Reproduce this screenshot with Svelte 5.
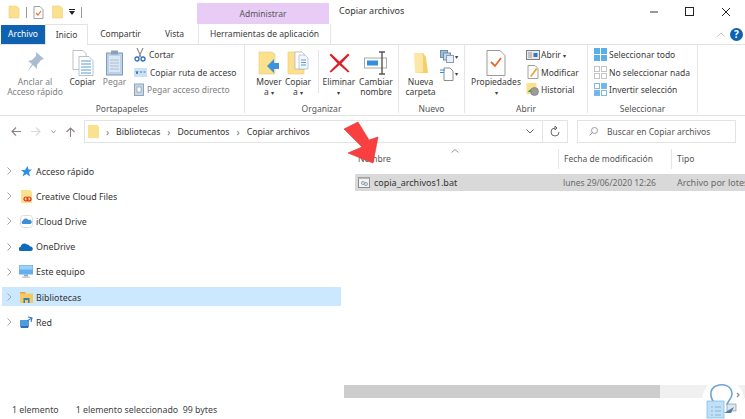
<script>
    const navItems = [
        { label: 'Acceso rápido', icon: 'star' },
        { label: 'Creative Cloud Files', icon: 'cc' },
        { label: 'iCloud Drive', icon: 'icloud' },
        { label: 'OneDrive', icon: 'onedrive' },
        { label: 'Este equipo', icon: 'pc' },
        { label: 'Bibliotecas', icon: 'lib', active: true },
        { label: 'Red', icon: 'net' }
    ];
</script>

<div class="window">
    <!-- title bar -->
    <header class="titlebar">
        <div class="qat">
            <svg width="12" height="14" viewBox="0 0 12 14"><path d="M1 1h7l3 2v10H1z" fill="#fbe08e" stroke="#f0cf7a" stroke-width=".6"/></svg>
            <i class="bar"></i>
            <svg width="11" height="13" viewBox="0 0 11 13"><path d="M1 .5h6l3 3v9H1z" fill="#fff" stroke="#8a8a8a" stroke-width=".8"/><path d="M3 7l2 2 3-4" fill="none" stroke="#e8743b" stroke-width="1.2"/></svg>
            <svg class="gap" width="11" height="14" viewBox="0 0 11 14"><path d="M.5 1h7l3 2v10H.5z" fill="#fbe08e" stroke="#f0cf7a" stroke-width=".6"/></svg>
            <svg width="6" height="6" viewBox="0 0 6 6"><path d="M0 0h6v1H0zM0 2h6L3 6z" fill="#222"/></svg>
            <i class="bar"></i>
        </div>
        <div class="tool-tab">Administrar</div>
        <div class="title">Copiar archivos</div>
        <div class="controls">
            <svg width="10" height="10" viewBox="0 0 10 10"><path d="M1 5h8" stroke="#333" stroke-width="1"/></svg>
            <svg width="10" height="10" viewBox="0 0 10 10"><rect x=".5" y=".5" width="8" height="8" fill="none" stroke="#222"/></svg>
            <svg width="10" height="10" viewBox="0 0 10 10"><path d="M1 1l8 8M9 1l-8 8" stroke="#222" stroke-width="1"/></svg>
        </div>
    </header>

    <!-- tabs -->
    <nav class="tabs">
        <div class="tab file-tab">Archivo</div>
        <div class="tab current">Inicio</div>
        <div class="tab compartir">Compartir</div>
        <div class="tab vista">Vista</div>
        <div class="tab tools">Herramientas de aplicación</div>
        <div class="tab-right">
            <svg width="8" height="5" viewBox="0 0 8 5"><path d="M.5 4.500L4 1l3.500 3.500" fill="none" stroke="#c4c4c4"/></svg>
            <span class="help">?</span>
        </div>
    </nav>

    <!-- ribbon -->
    <section class="ribbon">
        <div class="group" style="width:245px">
            <div class="cmds">
                <div class="big muted w-pin">
                    <svg width="20" height="24" viewBox="0 0 20 24"><path d="M11 1l8 7-3 1-4 5 0 4-4-4-6 7 5-8-4-3 4-1 4-4z" fill="#a9bcd0"/></svg>
                    <span>Anclar al<br>Acceso rápido</span>
                </div>
                <div class="big w-copy">
                    <svg width="22" height="26" viewBox="0 0 22 26"><path d="M1 .5h10l3 3v16H1z" fill="#fff" stroke="#a7a7a7" stroke-width=".7"/><path d="M7 6.500h10l4 4v15H7z" fill="#fff" stroke="#9aa9bd" stroke-width=".7"/><path d="M9 11h10M9 14h10M9 17h10M9 20h10M9 23h10" stroke="#5f9bd8" stroke-width="1.200"/></svg>
                    <span>Copiar</span>
                </div>
                <div class="big muted w-paste">
                    <svg width="18" height="26" viewBox="0 0 18 26"><rect x=".5" y="3" width="16" height="22" fill="#bcd2e8" stroke="#7e9ab8"/><rect x="3" y="6" width="11" height="16" fill="#dbe7f3"/><rect x="5" y=".5" width="7" height="4" fill="#8aa0b6"/><path d="M4 10h9M4 13h9M4 16h9M4 19h9" stroke="#a7bdd3"/></svg>
                    <span>Pegar</span>
                </div>
                <div class="smalls">
                    <div class="small">
                        <svg width="12" height="14" viewBox="0 0 12 14"><path d="M3 0l4 9M9 0L5 9" stroke="#8f8f8f" stroke-width="1.200"/><circle cx="3" cy="11" r="2" fill="none" stroke="#2a6fb8" stroke-width="1.300"/><circle cx="9" cy="11" r="2" fill="none" stroke="#2a6fb8" stroke-width="1.300"/></svg>
                        <span>Cortar</span>
                    </div>
                    <div class="small">
                        <svg width="13" height="9" viewBox="0 0 13 9"><rect width="13" height="9" fill="#c9e2f6"/><path d="M2 3l1 3 1-3M6 4h2M9.500 4h2" stroke="#2c5a88" stroke-width=".8" fill="none"/></svg>
                        <span>Copiar ruta de acceso</span>
                    </div>
                    <div class="small muted">
                        <svg width="10" height="13" viewBox="0 0 10 13"><rect x=".5" y="1" width="9" height="11.500" fill="#c6d6e6" stroke="#8ea5bc"/><rect x="3" y="4" width="4" height="5" fill="#fff" stroke="#7b8ea2" stroke-width=".6"/></svg>
                        <span>Pegar acceso directo</span>
                    </div>
                </div>
            </div>
            <div class="glabel">Portapapeles</div>
        </div>

        <div class="group" style="width:154px">
            <div class="cmds organizar">
                <div class="big w-move">
                    <svg width="22" height="24" viewBox="0 0 22 24"><path d="M1 1h13l3 2v20H1z" fill="#fbe08e" stroke="#eccb75" stroke-width=".6"/><path d="M9 15l7-7v4h5v6h-5v4z" fill="#3d92de"/></svg>
                    <span>Mover<br>a <em>▾</em></span>
                </div>
                <div class="big w-move">
                    <svg width="22" height="24" viewBox="0 0 22 24"><path d="M1 1h13l3 2v20H1z" fill="#fbe08e" stroke="#eccb75" stroke-width=".6"/><path d="M8 1h7l3 3v14H8z" fill="#fff" stroke="#9aa9bd" stroke-width=".6"/><path d="M12 4h6l3 3v11h-9z" fill="#f4f8fc" stroke="#9aa9bd" stroke-width=".6"/><path d="M14 9h5M14 11.500h5M14 14h5" stroke="#5f9bd8"/></svg>
                    <span>Copiar<br>a <em>▾</em></span>
                </div>
                <i class="vsep"></i>
                <div class="big w-del">
                    <svg width="21" height="21" viewBox="0 0 21 21"><path d="M2 1l8.500 8L19 1l1.500 1.500-8 8.500 8 8L19 20l-8.500-7.500L2 20 .5 19l8-8-8-8.500z" fill="#d8232a"/></svg>
                    <span>Eliminar<br><em>▾</em></span>
                </div>
                <div class="big w-ren">
                    <svg width="24" height="24" viewBox="0 0 24 24"><rect x=".5" y="7" width="22" height="10" fill="#fff" stroke="#a9a9a9"/><rect x="3" y="9.500" width="11" height="5" fill="#2f8fe0"/><path d="M15 1h6M15 23h6M18 1v22" stroke="#555" stroke-width="1.400"/></svg>
                    <span>Cambiar<br>nombre</span>
                </div>
            </div>
            <div class="glabel">Organizar</div>
        </div>

        <div class="group" style="width:66px">
            <div class="cmds nuevo">
                <div class="big w-new">
                    <svg width="16" height="22" viewBox="0 0 16 22"><path d="M2 1h8l3 4 2 16H3z" fill="#f6cf6c"/><path d="M1 1h8l1 3v16l-8 1z" fill="#fde7a6"/></svg>
                    <span>Nueva<br>carpeta</span>
                </div>
                <div class="mini">
                    <div class="miniicon">
                        <svg width="14" height="13" viewBox="0 0 14 13"><rect x=".5" y=".5" width="7" height="7" fill="#9dbcd9" stroke="#6f8daa"/><rect x="3.500" y="3" width="7" height="7" fill="#c4d8ea" stroke="#6f8daa"/><rect x="6.500" y="5.500" width="7" height="7" fill="#e9eff5" stroke="#8a9fb3"/></svg>
                        <em>▾</em>
                    </div>
                    <div class="miniicon">
                        <svg width="14" height="14" viewBox="0 0 14 14"><path d="M4 1h6l3 3v9.500H4z" fill="#fff" stroke="#8d8d8d"/><path d="M0 3h5M0 5.500h4" stroke="#2f8fe0"/></svg>
                        <em>▾</em>
                    </div>
                </div>
            </div>
            <div class="glabel">Nuevo</div>
        </div>

        <div class="group" style="width:123px">
            <div class="cmds abrir">
                <div class="big w-prop">
                    <svg width="20" height="26" viewBox="0 0 20 26"><path d="M1 .5h13l5 5v20H1z" fill="#fff" stroke="#9a9a9a"/><path d="M5 12l4 4 6-8" fill="none" stroke="#e8662f" stroke-width="1.800"/></svg>
                    <span>Propiedades<br><em>▾</em></span>
                </div>
                <div class="smalls">
                    <div class="small">
                        <svg width="14" height="10" viewBox="0 0 14 10"><rect x=".5" y=".5" width="13" height="9" fill="#e8e8e8" stroke="#7d7d7d"/><rect x="7.500" y="3" width="4" height="4" fill="#2f78c4"/><path d="M2 3h4M2 5h4M2 7h4" stroke="#9a9a9a"/></svg>
                        <span>Abrir <em>▾</em></span>
                    </div>
                    <div class="small">
                        <svg width="12" height="14" viewBox="0 0 12 14"><path d="M1 .5h7l3 3v10H1z" fill="#fff" stroke="#a0a0a0"/><path d="M3 11l6-8 1.500 1-6 8z" fill="#f0a63c"/></svg>
                        <span>Modificar</span>
                    </div>
                    <div class="small">
                        <svg width="13" height="13" viewBox="0 0 13 13"><rect y="0" width="10" height="11" fill="#fbe08e"/><circle cx="8" cy="8.500" r="4" fill="#9c9c9c" stroke="#6f6f6f" stroke-width=".6"/><path d="M1 9l3-3 1 3z" fill="#3aa655"/></svg>
                        <span>Historial</span>
                    </div>
                </div>
            </div>
            <div class="glabel">Abrir</div>
        </div>

        <div class="group" style="width:110px">
            <div class="cmds seleccionar">
                <div class="smalls">
                    <div class="small">
                        <svg width="13" height="13" viewBox="0 0 13 13"><path d="M0 0h13v13H0z" fill="#5aaeea"/><path d="M6.500 0v13M0 6.500h13" stroke="#fff"/></svg>
                        <span>Seleccionar todo</span>
                    </div>
                    <div class="small">
                        <svg width="13" height="13" viewBox="0 0 13 13"><g fill="#fff" stroke="#c4c4c4"><rect x=".5" y=".5" width="5" height="5"/><rect x="7.500" y=".5" width="5" height="5"/><rect x=".5" y="7.500" width="5" height="5"/><rect x="7.500" y="7.500" width="5" height="5"/></g></svg>
                        <span>No seleccionar nada</span>
                    </div>
                    <div class="small">
                        <svg width="13" height="13" viewBox="0 0 13 13"><g stroke="#7fb8e6"><rect x=".5" y=".5" width="5" height="5" fill="#fff"/><rect x="7.500" y=".5" width="5" height="5" fill="#6db7ee"/><rect x=".5" y="7.500" width="5" height="5" fill="#6db7ee"/><rect x="7.500" y="7.500" width="5" height="5" fill="#fff"/></g></svg>
                        <span>Invertir selección</span>
                    </div>
                </div>
            </div>
            <div class="glabel">Seleccionar</div>
        </div>
    </section>

    <!-- address bar -->
    <section class="addressrow">
        <div class="arrows">
            <svg width="10" height="9" viewBox="0 0 10 9"><path d="M5 .5L1 4.500l4 4M1 4.500h9" fill="none" stroke="#8c7f8c" stroke-width="1.100"/></svg>
            <svg width="10" height="9" viewBox="0 0 10 9"><path d="M5 .5l4 4-4 4M9 4.500H0" fill="none" stroke="#d8d8d8" stroke-width="1.100"/></svg>
            <svg width="5" height="4" viewBox="0 0 5 4"><path d="M.5.500L2.500 3 4.500.500" fill="none" stroke="#9a9a9a"/></svg>
            <svg width="9" height="10" viewBox="0 0 9 10"><path d="M.5 5l4-4 4 4M4.500 1v9" fill="none" stroke="#8c7f8c" stroke-width="1.100"/></svg>
        </div>
        <div class="address">
            <svg width="11" height="13" viewBox="0 0 11 13"><path d="M0 0h9l2 2v11H0z" fill="#fbe08e"/></svg>
            <span class="crumbsep">›</span><span>Bibliotecas</span>
            <span class="crumbsep">›</span><span>Documentos</span>
            <span class="crumbsep">›</span><span>Copiar archivos</span>
            <span class="spacer"></span>
            <svg width="8" height="5" viewBox="0 0 8 5"><path d="M.5.500L4 4 7.500.500" fill="none" stroke="#666" stroke-width="1"/></svg>
        </div>
        <div class="refresh">
            <svg width="10" height="11" viewBox="0 0 10 11"><path d="M5 2a4 4 0 1 0 4 4M5 0v4l2-2z" fill="none" stroke="#6a6a6a"/></svg>
        </div>
        <div class="search">
            <svg width="9" height="9" viewBox="0 0 9 9"><circle cx="5.500" cy="3.500" r="3" fill="none" stroke="#9a9a9a"/><path d="M3.500 5.500L.5 8.500" stroke="#9a9a9a"/></svg>
            <span>Buscar en Copiar archivos</span>
        </div>
    </section>

    <!-- main -->
    <main class="body">
        <aside class="sidebar">
            {#each navItems as item}
                <div class="navrow" class:active={item.active}>
                    <svg class="tw" width="5" height="8" viewBox="0 0 5 8"><path d="M.5.500L4 4 .5 7.500" fill="none" stroke="#a6a6a6" stroke-width="1"/></svg>
                    <span class="navicon">
                        {#if item.icon === 'star'}
                            <svg width="11" height="11" viewBox="0 0 11 11"><path d="M6.500 0l1 3.500H11L8 6l1 4.500-3.500-2.500L1.500 10.500 3 6.500 0 4h4z" fill="#2f8fe0"/></svg>
                        {:else if item.icon === 'cc'}
                            <svg width="11" height="13" viewBox="0 0 11 13"><path d="M0 0h9l2 2v11H0z" fill="#fbe08e"/><circle cx="5" cy="9" r="2" fill="none" stroke="#d8321f" stroke-width="1.200"/><circle cx="8" cy="9" r="2" fill="none" stroke="#d8321f" stroke-width="1.200"/></svg>
                        {:else if item.icon === 'icloud'}
                            <svg width="13" height="13" viewBox="0 0 13 13"><rect x=".5" y=".5" width="12" height="12" rx="3" fill="#fff" stroke="#dcdcdc"/><path d="M2.500 9a2 2 0 0 1 .5-3.500 3 3 0 0 1 5.500-.5 2.200 2.200 0 0 1 2 4z" fill="#3d8fd9"/></svg>
                        {:else if item.icon === 'onedrive'}
                            <svg width="14" height="8" viewBox="0 0 14 8"><path d="M2 8a2 2 0 0 1-.5-4A4 4 0 0 1 8 1.500 3 3 0 0 1 11 3.500a2.300 2.300 0 0 1 1 4.500z" fill="#0f6cbd"/></svg>
                        {:else if item.icon === 'pc'}
                            <svg width="14" height="13" viewBox="0 0 14 13"><rect width="14" height="9.500" fill="#62b0ee"/><rect x=".5" y=".5" width="13" height="4" fill="#9ed0f6"/><rect x="5" y="9.500" width="4" height="2" fill="#9aa7b3"/><rect x="3" y="11.500" width="8" height="1.500" fill="#c4ccd4"/></svg>
                        {:else if item.icon === 'lib'}
                            <svg width="13" height="11" viewBox="0 0 13 11"><path d="M0 0h5l1 1.500h7V11H0z" fill="#f7c95f"/><path d="M0 0h5l1 1.500H0z" fill="#e6a73a"/><path d="M3.500 11V6h6v5H8V8H5v3z" fill="#2f7ec8"/></svg>
                        {:else}
                            <svg width="13" height="12" viewBox="0 0 13 12"><rect y="4" width="9" height="6" fill="#4f9be0"/><path d="M0 10h9L8 12H1z" fill="#2f6eaa"/><path d="M7 5l5-3M8 1l4 1-1 4" fill="none" stroke="#3d7fbc" stroke-width="1.100"/></svg>
                        {/if}
                    </span>
                    <span>{item.label}</span>
                </div>
            {/each}
        </aside>

        <div class="content">
            <div class="columns">
                <span class="sort"><svg width="8" height="4" viewBox="0 0 8 4"><path d="M.5 3.500L4 .500l3.500 3" fill="none" stroke="#9a9a9a"/></svg></span>
                <div class="col c-name">Nombre</div>
                <div class="col c-date">Fecha de modificación</div>
                <div class="col c-type">Tipo</div>
            </div>
            <div class="filerow">
                <div class="c-name cell">
                    <svg width="12" height="11" viewBox="0 0 12 11"><rect x=".5" y=".5" width="11" height="10" fill="#f2f2f2" stroke="#8d8d8d"/><rect x=".5" y=".5" width="11" height="1.500" fill="#b9b9b9"/><circle cx="5" cy="6" r="1.500" fill="none" stroke="#8aa0b6"/><circle cx="8" cy="7" r="1.500" fill="none" stroke="#8aa0b6"/></svg>
                    <span class="fname">copia_archivos1.bat</span>
                </div>
                <div class="c-date cell soft">lunes 29/06/2020 12:26</div>
                <div class="c-type cell soft">Archivo por lotes</div>
            </div>
            <div class="filler"></div>
            <div class="hscroll"><div class="thumb"></div></div>
        </div>
    </main>

    <footer class="status">
        <span>1 elemento</span>
        <span>1 elemento seleccionado&nbsp; 99 bytes</span>
    </footer>

    <!-- annotation arrow on top of the screenshot -->
    <svg class="arrow" width="38" height="46" viewBox="0 0 38 46"><path d="M2 9L16 2l11 18 9-3-5 26L6 33l14-6z" fill="#f93f3f" stroke="#d93232" stroke-width=".6"/></svg>

    <!-- watermark badge in the corner -->
    <svg class="mark" width="44" height="44" viewBox="0 0 44 44">
        <circle cx="22" cy="22" r="21" fill="#fff" fill-opacity=".9"/>
        <path d="M16 27c-8-6-8-16-1-19 8-3 16 0 16 8 0 5-5 7-5 11" fill="none" stroke="#6ea3d6" stroke-width="1.600"/>
        <rect x="6" y="23" width="17" height="17" fill="#bfe0f7" stroke="#7cc0ee" stroke-width=".8"/>
        <path d="M10 29h2M14 29h6M10 33h2M14 33h6M10 37h2M14 37h6" stroke="#8fb4cf"/>
        <rect x="26" y="26" width="9" height="7" fill="#dfe6ec" stroke="#7c8a96" stroke-width=".6"/>
        <path d="M23 35l10-6-3 6z" fill="#4d7fa8"/>
        <path d="M36 15l2 2-2 2" fill="none" stroke="#8d8d8d" stroke-width="1.200"/>
    </svg>
</div>

<style>
:global(body) {
    margin: 0;
    background: #fff;
}

.window {
    position: relative;
    width: 745px;
    height: 419px;
    overflow: hidden;
    display: flex;
    flex-direction: column;
    font-family: "Noto Sans", "Open Sans", sans-serif;
    font-size: 8.5px;
    color: #3a3a3a;
    background: #fff;
}
em {
    font-style: normal;
    font-size: 6px;
}

/* title bar */
.titlebar {
    height: 24px;
    display: flex;
    align-items: flex-end;
    flex: none;
}
.qat {
    width: 197px;
    height: 24px;
    box-sizing: border-box;
    padding-left: 8px;
    display: flex;
    align-items: center;
    gap: 6px;
}
.qat .gap { margin-left: 2px; margin-right: 0; }
.bar {
    width: 1px;
    height: 11px;
    background: #9a9a9a;
}
.tool-tab {
    width: 132px;
    height: 21px;
    background: #e8ccf6;
    text-align: center;
    line-height: 22px;
    color: #555;
}
.title {
    flex: 1;
    height: 24px;
    line-height: 22px;
    padding-left: 10px;
    font-size: 9px;
    color: #333;
}
.controls {
    width: 113px;
    height: 24px;
    display: flex;
    align-items: center;
    gap: 26px;
    padding-left: 17px;
    box-sizing: border-box;
}

/* tabs */
.tabs {
    height: 20px;
    display: flex;
    align-items: stretch;
    flex: none;
    border-bottom: 1px solid #e3e3e3;
    font-size: 8.5px;
}
.tab {
    line-height: 20px;
    text-align: center;
}
.file-tab {
    margin-left: 1px;
    width: 44px;
    background: #0f62b0;
    color: #fff;
    height: 19px;
    margin-top: 1px;
    line-height: 18px;
}
.current {
    width: 43px;
    background: #fff;
    border: 1px solid #e3e3e3;
    border-bottom: none;
    box-sizing: border-box;
    height: 21px;
}
.compartir { width: 63px; padding-left: 2px; box-sizing: border-box; }
.vista { width: 47px; box-sizing: border-box; }
.tools {
    width: 131px;
    border-left: 1px solid #e6e6e6;
    border-right: 1px solid #e6e6e6;
    background: #fff;
}
.tab-right {
    margin-left: auto;
    width: 27px;
    display: flex;
    align-items: center;
    gap: 5px;
    margin-right: 1px;
}
.help {
    width: 13px;
    height: 13px;
    border-radius: 50%;
    background: #0f62b0;
    color: #fff;
    font-size: 10px;
    font-weight: 700;
    line-height: 13px;
    text-align: center;
}

/* ribbon */
.ribbon {
    height: 70px;
    flex: none;
    display: flex;
    border-bottom: 1px solid #e3e3e3;
}
.group {
    box-sizing: border-box;
    border-right: 1px solid #e6e6e6;
    display: flex;
    flex-direction: column;
    height: 68px;
}
.cmds {
    flex: 1;
    display: flex;
    align-items: flex-start;
    padding-top: 5px;
    padding-left: 4px;
    min-height: 0;
}
.glabel {
    height: 10px;
    line-height: 12px;
    text-align: center;
    color: #555;
    flex: none;
}
.big {
    display: flex;
    flex-direction: column;
    align-items: center;
    text-align: center;
    line-height: 10px;
    flex: none;
}
.big svg {
    height: 26px;
    margin-bottom: 1px;
    flex: none;
}
.big.muted { color: #808080; }
.w-pin { width: 62px; }
.w-copy { width: 33px; }
.w-paste { width: 31px; }
.w-move { width: 29px; }
.w-del { width: 36px; }
.w-ren { width: 38px; }
.w-new { width: 35px; }
.w-prop { width: 42px; }
.smalls {
    display: flex;
    flex-direction: column;
    gap: 3.500px;
    margin-left: 4px;
    margin-top: -2.500px;
}
.small {
    height: 14px;
    display: flex;
    align-items: center;
    gap: 3px;
    white-space: nowrap;
}
.small svg { flex: none; }
.small.muted { color: #808080; }
.organizar { padding-left: 9.500px; }
.vsep {
    width: 1px;
    height: 43px;
    background: #e6e6e6;
    margin: 0 2px 0 5.500px;
    flex: none;
}
.mini {
    display: flex;
    flex-direction: column;
    gap: 4px;
    margin-left: 2px;
}
.miniicon {
    display: flex;
    align-items: center;
    gap: 1px;
}
.abrir { padding-left: 10px; }
.abrir .smalls { margin-left: 9px; }
.abrir .small { gap: 1px; }
.abrir .small svg { width: 14px; }
.seleccionar { padding-left: 0; }
.seleccionar .smalls { margin-left: 6px; }
.seleccionar .small { gap: 2px; }

/* address row */
.addressrow {
    height: 23px;
    margin-top: 4px;
    display: flex;
    flex: none;
    align-items: stretch;
}
.arrows {
    width: 84px;
    box-sizing: border-box;
    padding-left: 11px;
    display: flex;
    align-items: center;
    gap: 10px;
}
.address {
    width: 459px;
    box-sizing: border-box;
    border: 1px solid #e3e3e3;
    display: flex;
    align-items: center;
    padding: 0 8px 0 3px;
    gap: 7px;
    font-size: 8.700px;
    color: #333;
}
.crumbsep {
    color: #777;
    font-size: 10px;
    line-height: 10px;
}
.spacer { flex: 1; }
.refresh {
    width: 25px;
    box-sizing: border-box;
    border: 1px solid #e3e3e3;
    border-left: none;
    display: flex;
    align-items: center;
    justify-content: center;
}
.search {
    width: 159px;
    margin-left: 9px;
    box-sizing: border-box;
    border: 1px solid #e3e3e3;
    display: flex;
    align-items: center;
    padding-left: 11px;
    gap: 9px;
    color: #555;
}

/* main area */
.body {
    flex: 1;
    display: flex;
    min-height: 0;
}
.sidebar {
    width: 344px;
    flex: none;
    box-sizing: border-box;
    padding: 15.500px 3px 0 2px;
}
.navrow {
    height: 25.200px;
    display: flex;
    align-items: center;
    font-size: 8.900px;
    color: #333;
}
.navrow.active {
    background: linear-gradient(#fff 3px, #cce8ff 3px, #cce8ff 22px, #fff 22px);
}
.tw {
    margin-left: 5px;
    width: 5px;
    flex: none;
}
.navicon {
    width: 14px;
    margin-left: 7px;
    margin-right: 3px;
    display: flex;
    justify-content: center;
    align-items: center;
    flex: none;
}
.content {
    flex: 1;
    display: flex;
    flex-direction: column;
    min-width: 0;
    position: relative;
}
.columns {
    display: flex;
    height: 24px;
    margin-top: 4px;
    color: #555;
    flex: none;
    align-items: center;
}
.sort {
    position: absolute;
    left: 107px;
    top: 5px;
    line-height: 4px;
}
.c-name { width: 214px; flex: none; box-sizing: border-box; }
.c-date { width: 113px; flex: none; box-sizing: border-box; }
.c-type { flex: 1; box-sizing: border-box; white-space: nowrap; }
.col { height: 20px; line-height: 20px; padding-left: 5px; border-left: 1px solid #e6e6e6; }
.col.c-name { border-left: none; padding-left: 14px; }
.filerow {
    display: flex;
    height: 17.500px;
    margin-top: 2.500px;
    margin-left: 11px;
    background: #d9d9d9;
    align-items: center;
    color: #444;
    overflow: hidden;
}
.filerow .c-name { width: 203px; }
.filerow .c-date { padding-left: 5px; }
.filerow .c-type { padding-left: 6px; font-size: 9px; }
.cell { display: flex; align-items: center; }
.filerow .c-name svg { margin: 0 4px 0 3px; flex: none; }
.fname { color: #333; font-size: 9px; }
.soft { color: #6a6a6a; }
.filler { flex: 1; }
.hscroll {
    height: 13px;
    flex: none;
    margin-bottom: 2px;
    background: #f0f0f0;
}
.thumb {
    width: 316px;
    height: 100%;
    background: #cdcdcd;
}

/* status bar */
.status {
    height: 19px;
    flex: none;
    display: flex;
    align-items: center;
    padding-left: 12px;
    gap: 17px;
    font-size: 8.800px;
    color: #444;
}

/* overlays */
.arrow {
    position: absolute;
    left: 342px;
    top: 120px;
}
.mark {
    position: absolute;
    left: 701px;
    top: 378px;
}
</style>
